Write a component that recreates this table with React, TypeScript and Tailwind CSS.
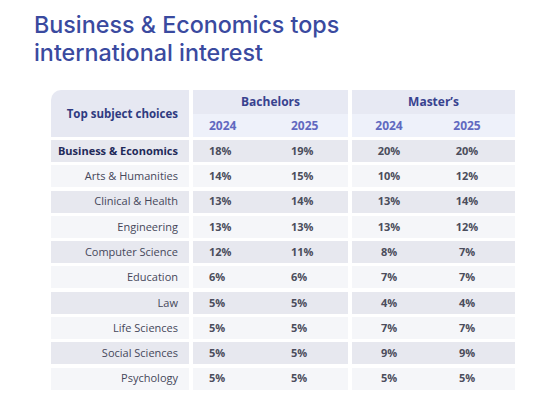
const rows: [string, string, string, string, string][] = [
  ["Business & Economics", "18%", "19%", "20%", "20%"],
  ["Arts & Humanities", "14%", "15%", "10%", "12%"],
  ["Clinical & Health", "13%", "14%", "13%", "14%"],
  ["Engineering", "13%", "13%", "13%", "12%"],
  ["Computer Science", "12%", "11%", "8%", "7%"],
  ["Education", "6%", "6%", "7%", "7%"],
  ["Law", "5%", "5%", "4%", "4%"],
  ["Life Sciences", "5%", "5%", "7%", "7%"],
  ["Social Sciences", "5%", "5%", "9%", "9%"],
  ["Psychology", "5%", "5%", "5%", "5%"],
];

export default function App() {
  return (
    <div className="w-[540px] h-[403px] bg-white overflow-hidden" style={{ fontFamily: '"Open Sans", sans-serif' }}>
      <h1
        className="pl-[34px] pt-[11px] text-[23.3px] leading-[28px] font-medium text-[#3a4a9f]"
        style={{ fontFamily: 'Inter, sans-serif' }}
      >
        Business &amp; Economics tops
        <br />
        international interest
      </h1>

      <div className="ml-[51px] mt-[23px] flex flex-col">
        {/* header */}
        <div className="flex gap-[4px] h-[47px]">
          <div className="w-[138px] rounded-tl-[10px] bg-[#e6e8f2] flex items-center justify-end pr-[11px] text-[11.5px] font-bold text-[#2f3a80] whitespace-nowrap">
            Top subject choices
          </div>
          <div className="w-[155px] flex flex-col">
            <div className="h-[24px] bg-[#e7e9f3] flex items-center justify-center text-[12px] font-bold text-[#38428f]">
              Bachelors
            </div>
            <div className="h-[23px] bg-[#eef1fa] flex items-center pl-[16px] text-[12px] font-bold text-[#6169c0]">
              <span className="w-[82px]">2024</span>
              <span>2025</span>
            </div>
          </div>
          <div className="w-[163px] flex flex-col">
            <div className="h-[24px] bg-[#e7e9f3] flex items-center justify-center text-[12px] font-bold text-[#38428f]">
              Master’s
            </div>
            <div className="h-[23px] bg-[#eef1fa] flex items-center text-[12px] font-bold text-[#6169c0]">
              <span className="w-[74px] text-center">2024</span>
              <span className="w-[82px] text-center">2025</span>
            </div>
          </div>
        </div>

        {rows.map((r, i) => {
          const bg = i % 2 === 0 ? "bg-[#e7e8ef]" : "bg-[#f5f6f9]";
          const first = i === 0;
          return (
            <div key={r[0]} className={`flex gap-[4px] h-[22px] ${first ? "mt-[3px]" : "mt-[3.3px]"}`}>
              <div
                className={`w-[138px] ${bg} flex items-center justify-end pr-[11px] text-[11px] whitespace-nowrap ${
                  first ? "font-bold text-[#1f2a5a]" : "text-[#45475a]"
                }`}
              >
                {r[0]}
              </div>
              <div className={`w-[155px] ${bg} flex items-center pl-[16px] text-[11px] font-bold text-[#4b4d5c]`}>
                <span className="w-[82px]">{r[1]}</span>
                <span>{r[2]}</span>
              </div>
              <div className={`w-[163px] ${bg} flex items-center text-[11px] font-bold text-[#4b4d5c]`}>
                <span className="w-[74px] text-center">{r[3]}</span>
                <span className="w-[82px] text-center">{r[4]}</span>
              </div>
            </div>
          );
        })}
      </div>
    </div>
  );
}
